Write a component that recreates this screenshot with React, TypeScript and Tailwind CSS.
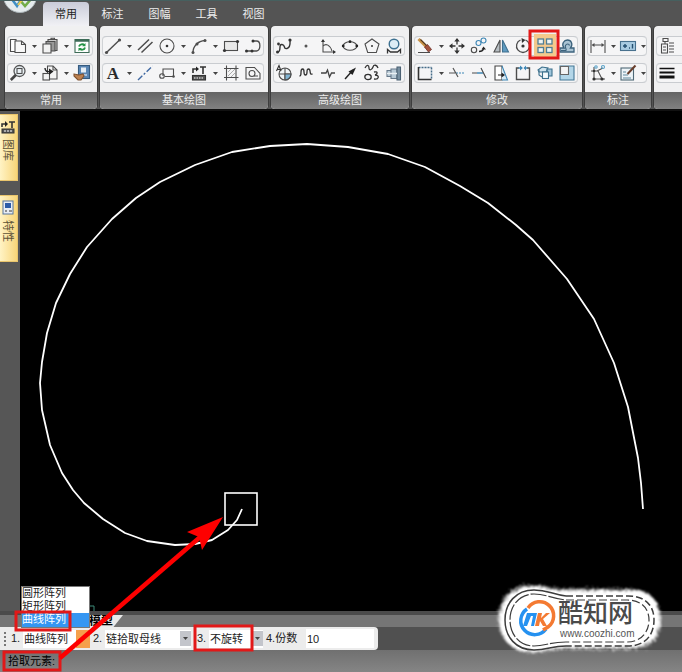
import React from "react";

type Item = { name: string; art: React.ReactNode; menu?: boolean; active?: boolean };

const K = "#4d4d4d";
const B = "#3f87b5";

const Icon = ({ children }: { children: React.ReactNode }) => (
  <svg viewBox="0 0 18 18" className="h-[18px] w-[18px] shrink-0" fill="none" stroke={K} strokeWidth="1.100" aria-hidden="true">
    {children}
  </svg>
);

const commonA: Item[] = [
  {
    name: "复制", menu: true,
    art: <><path d="M1.500 2.500h5.500v12H1.500z" fill="#fff" /><path d="M6 4h6.500l4 3.500v8h-10.500z" fill="#f8f8f8" /><path d="M12.500 4v3.500h4" /></>,
  },
  {
    name: "粘贴", menu: true,
    art: <><path d="M7 4V2.500h9v11h-2M10 2.500V1.200h3.500v1.300" fill="#ccc" /><path d="M5 14V4.500h9V14z" fill="#999" /><path d="M2 16V7h8v9z" fill="#f2f2f2" /></>,
  },
  {
    name: "刷新",
    art: <><path d="M2 2.500h14v13H2z" fill="#fff" stroke="#3d6b57" /><path d="M2 3.500h14" stroke="#3d6b57" strokeWidth="2.500" /><path d="M6 9.500c.5-2.300 4-3 5.500-1.200M12 10.500c-.5 2.500-4 3-5.500 1.200" stroke="#259447" strokeWidth="1.800" /><path d="M12.500 6v3.200H9.200zM5.500 14.200V11H9z" fill="#259447" stroke="none" /></>,
  },
];
const commonB: Item[] = [
  {
    name: "缩放", menu: true,
    art: <><circle cx="10.500" cy="7" r="5.500" fill="#eaf1f5" stroke="#555" strokeWidth="1.300" /><rect x="8" y="4.500" width="5" height="5" /><path d="M6.800 11l-5 5" stroke="#444" strokeWidth="2.600" /></>,
  },
  {
    name: "移动图层", menu: true,
    art: <><path d="M6.500 2h5.500l4 4v9H6.500z" fill="#f4f4f4" /><path d="M12 2v4h4" /><rect x="2" y="9.500" width="6.500" height="6.500" fill="#f4f4f4" /><path d="M4 4c0 3 2 4 5 3.500" stroke="#222" strokeWidth="1.400" /><path d="M8 4.500l4.500 3L8 11z" fill="#222" stroke="none" /></>,
  },
  {
    name: "格式刷",
    art: <><rect x="5.500" y="1.500" width="11" height="13" fill="#5a86b4" stroke="#365b7f" /><path d="M8 3.500h5v5H8z" fill="#e6eef5" stroke="none" /><path d="M8 11h6" stroke="#fff" /><path d="M1 10c2 0 3 1 5 1l4-1 1 2-3 4H5l-4-4z" fill="#bd8150" stroke="#805433" /></>,
  },
];

const drawA: Item[] = [
  { name: "直线", menu: true, art: <><path d="M2.500 15.500L15.500 3" strokeWidth="1.400" /><circle cx="2.500" cy="15.500" r="1.600" fill={K} stroke="none" /><circle cx="15.500" cy="3" r="1.600" fill={K} stroke="none" /></> },
  { name: "平行线", art: <path d="M2 13L13 2.500M5.500 15.500L16.500 5" strokeWidth="1.500" /> },
  { name: "圆", menu: true, art: <><circle cx="9" cy="9" r="7" /><circle cx="9" cy="9" r="1.300" fill="#333" stroke="none" /></> },
  { name: "圆弧", menu: true, art: <><path d="M3 15.500C3 9 8 4 15 3.500" strokeWidth="1.300" /><circle cx="3" cy="15.500" r="1.500" fill={K} stroke="none" /><circle cx="7" cy="7" r="1.500" fill={K} stroke="none" /><circle cx="15" cy="3.500" r="1.500" fill={K} stroke="none" /></> },
  { name: "矩形", art: <><rect x="2.500" y="4.500" width="13" height="9" fill="#e9e9e9" /><circle cx="2.500" cy="13.500" r="1.600" fill="#333" stroke="none" /><circle cx="15.500" cy="4.500" r="1.600" fill="#333" stroke="none" /></> },
  { name: "多段线", art: <><path d="M9 4h3.500c4.500 0 4.500 9 0 10H2.500" strokeWidth="1.300" /><g fill="#333" stroke="none"><circle cx="9" cy="4" r="1.500" /><circle cx="8" cy="14" r="1.500" /><circle cx="2.500" cy="14" r="1.500" /></g></> },
];
const drawB: Item[] = [
  { name: "文字", menu: true, art: <text x="9" y="15" textAnchor="middle" fill="#2b2b2b" stroke="none" fontFamily="Liberation Serif, serif" fontWeight="700" fontSize="17">A</text> },
  { name: "中心线", art: <path d="M2 16L16.500 2" stroke="#3f68a2" strokeWidth="1.400" strokeDasharray="6 2 2 2" /> },
  { name: "等距线", menu: true, art: <><path d="M5 12V5h10.500v7.500H7" /><circle cx="4" cy="12" r="2.300" /><circle cx="15.500" cy="12.500" r="1.300" fill={K} stroke="none" /></> },
  { name: "提取图符", menu: true, art: <><path d="M3 9V5h4M10 3h6M13 3v7" stroke="#333" strokeWidth="1.600" /><path d="M6 2.500L9 5 6 7.500z" fill="#222" stroke="none" /><rect x="2.500" y="11.500" width="13" height="4.500" fill="#555" stroke="#333" /><path d="M4 14h10" stroke="#fff" strokeDasharray="1.500 1" /></> },
  { name: "剖面线", art: <><path d="M4.500 1.500v15M14 1.500v15M2 4.500h14.500M2 13.500h14.500" /><path d="M6 8l3-3M6 12l7-7M9 13l4-4" stroke="#999" strokeWidth=".8" /></> },
  { name: "局部放大", art: <><path d="M2 3.500h8.500L16 9.500v5.500H2z" /><circle cx="8" cy="9.500" r="3" /><path d="M10 12h4" /></> },
];

const advA: Item[] = [
  { name: "样条", art: <><path d="M2.500 15C7 15 3 7 7 7.500s1 5 5 4 3-6 3-8.500" stroke="#333" strokeWidth="1.400" /><g fill="#333" stroke="none"><circle cx="2.500" cy="15" r="1.500" /><circle cx="3.500" cy="7" r="1.400" /><circle cx="15" cy="3" r="1.600" /></g></> },
  { name: "点", art: <circle cx="9" cy="9" r="1.500" fill="#555" stroke="none" /> },
  { name: "公式曲线", art: <><path d="M4 3v12h12M4 9c3-3 7-1 9 5" /><path d="M2 5l2-3 2 3zM14 13l3 2-3 2z" fill="#333" stroke="none" /></> },
  { name: "椭圆", art: <><ellipse cx="9" cy="9" rx="6.800" ry="4.300" /><g fill="#222" stroke="none"><circle cx="2.200" cy="9" r="1.400" /><circle cx="15.800" cy="9" r="1.400" /><circle cx="9" cy="4.700" r="1.400" /></g></> },
  { name: "正多边形", art: <><path d="M9 2l7 5-2.700 8.500H4.700L2 7z" /><circle cx="9" cy="9" r="1" fill="#333" stroke="none" /></> },
  { name: "圆弧拟合", art: <><circle cx="9" cy="7" r="4.800" stroke="#3d7191" fill="#dcecf5" strokeWidth="1.400" /><path d="M2.500 16.500v-4l3 2.500h7l3-2.500v4" stroke="#333" strokeWidth="1.300" /></> },
];
const advB: Item[] = [
  { name: "局部视图", art: <><circle cx="10" cy="10" r="6" fill="#f0f5f8" /><path d="M10 4v12M4 10h12" /><path d="M10 10h6a6 6 0 01-6 6z" fill="#7fb3d2" /><path d="M1.500 7L4 1.500 6 7M2.500 5.500h3" stroke="#333" /></> },
  { name: "波浪线", art: <path d="M2.500 12c3 0 0-7 3-7s0 6 3 6 0-6 3-6 0 6 4 5" stroke="#333" strokeWidth="1.300" /> },
  { name: "双折线", art: <path d="M2 9h5l1.500-3 2 7 2-4H16" stroke="#444" strokeWidth="1.300" /> },
  { name: "箭头", art: <><path d="M4 15L12 6" stroke="#222" strokeWidth="1.400" /><path d="M15 3.500L7.500 7.500l4 3.500z" fill="#222" stroke="none" /></> },
  { name: "齿轮", art: <><path d="M2 4c2-4 4-3 4 0s3 2 4-1 4-2 5 1M11 8c4-1 4 2 1 3 5 0 4 5-1 4" stroke="#333" strokeWidth="1.300" /><ellipse cx="5" cy="13" rx="3.200" ry="2.600" stroke="#333" strokeWidth="1.300" /></> },
  { name: "孔/轴", art: <><path d="M2 6.500h4v6H2zM6 5h6v9.500H6z" fill="#b9cbd7" stroke="#66798a" /><path d="M12 3h3.500v13H12z" fill="#7991a3" stroke="#4b6173" /><path d="M2 9.500h10" stroke="#e9f0f4" strokeWidth="1.500" /></> },
];

const editA: Item[] = [
  { name: "删除", menu: true, art: <><path d="M2.500 2l8 8" stroke="#c99347" strokeWidth="3" /><path d="M4.500 2.500l7 7" stroke="#51361c" /><path d="M8.500 10l3-2.500 4 5-3 2.500z" fill="#a4533b" stroke="#6c2c28" strokeWidth=".8" /><path d="M2 15.500h12" /></> },
  { name: "平移", art: <><path d="M9 3.500v11M3.500 9h11" stroke="#333" strokeWidth="1.300" strokeDasharray="4 3" /><path d="M9 1l2.700 3.500H6.300zM9 17l2.700-3.500H6.300zM1 9l3.500-2.700v5.400zM17 9l-3.500-2.700v5.400z" fill="#333" stroke="none" /></> },
  { name: "平移复制", art: <><circle cx="8.500" cy="6" r="2.500" stroke={B} /><circle cx="13.500" cy="3.500" r="2.500" stroke={B} /><circle cx="4" cy="13" r="2.700" /><path d="M9 14.500c3 0 4-1 4.500-2.500" stroke="#222" strokeWidth="1.300" /><path d="M11.500 12.500l2-3 2.500 3z" fill="#222" stroke="none" /></> },
  { name: "镜像", art: <><path d="M8 3v12H2z" fill="#b5bcc1" /><path d="M10.500 3v12h6z" fill="#5e9ac0" stroke="#40708f" /></> },
  { name: "旋转", art: <><path d="M11.500 3a6.500 6.500 0 11-5 0" strokeWidth="1.300" /><path d="M7.500 1l4 2-3.500 3z" fill="#333" stroke="none" /><circle cx="9" cy="9" r="1.600" fill="#333" stroke="none" /></> },
  { name: "阵列", active: true, art: <g fill="#eef4f3" stroke="#507f95" strokeWidth="1.300"><rect x="2" y="2" width="5.500" height="5" /><rect x="10.500" y="2" width="5.500" height="5" /><rect x="2" y="10.500" width="5.500" height="5" /><rect x="10.500" y="10.500" width="5.500" height="5" /></g> },
  { name: "偏移", art: <><path d="M2 15v-4h4c-3-4 0-8 3.500-8s6 4 3 8H16v4z" fill="#a9c3d3" stroke="#3c637d" strokeWidth="1.300" /><path d="M3 13.500h5c1-1-1.500-3-.5-5s3.500-2 4 0" stroke="#3c637d" /></> },
];
const editB: Item[] = [
  { name: "打散", menu: true, art: <><path d="M2.500 3.500h13M15.500 3.500v12" stroke="#456c88" strokeWidth="1.500" strokeDasharray="2 1" /><path d="M2.500 3v12.500h13" stroke="#333" strokeWidth="1.600" /></> },
  { name: "裁剪", art: <><path d="M8 9h9" stroke={B} strokeDasharray="2 1" /><path d="M5 4l5 9M1 9h6" stroke="#555" strokeWidth="1.200" /></> },
  { name: "延伸", art: <><path d="M7 9h6" stroke={B} strokeWidth="1.500" /><path d="M2 9h5M11 4l5 10" strokeWidth="1.200" /></> },
  { name: "拉伸", art: <><path d="M3 2h7v14H3z" stroke="#444" fill="#fff" /><path d="M10 2l5.500 14H10" stroke={B} fill="#d7eaf5" /><path d="M6 11h5" stroke="#222" /><path d="M9.500 8.500l3.500 2.500-3.500 2.500z" fill="#222" stroke="none" /></> },
  { name: "打断", art: <><path d="M5 4H2.500v11.500h13V4H13" strokeWidth="1.400" /><path d="M4.500 4h3M13.500 4h-3" stroke={B} strokeWidth="1.600" /><path d="M6 1.500L9 4 6 6.500zM12 1.500L9.500 4 12 6.500z" fill={B} stroke="none" /></> },
  { name: "分解", art: <g stroke="#3d718d"><path d="M2 6l4-3 6 1-2 4H3z" fill="#cfe4ef" /><path d="M3 6v5l3 2" /><path d="M11 5h5v7h-4z" fill="#9fc5db" /><rect x="6.500" y="8" width="6" height="6.500" fill="#f4fafc" /></g> },
  { name: "缩放图形", art: <><path d="M2 2h14v14H2z" fill="#b3d6e8" stroke="#447896" /><path d="M2.500 2.500h8v8h-8z" fill="#f4f4f4" stroke="#666" /></> },
];

const dimA: Item[] = [
  { name: "尺寸标注", menu: true, art: <><path d="M2 3v13M16 3v13M4 8h10" /><path d="M2.500 8l3-2v4zM15.500 8l-3-2v4z" fill={K} stroke="none" /></> },
  { name: "形位公差", menu: true, art: <><rect x="1.500" y="4.500" width="15" height="9" fill="#a9cce2" stroke="#48718e" /><path d="M4 9h4M6 7v4M10 11h1M13.500 7v4.500" stroke="#244f70" strokeWidth="1.400" /></> },
];
const dimB: Item[] = [
  { name: "坐标标注", menu: true, art: <><path d="M5 3v12h11M2 7h6l6-3M9 7l4 8" /><g fill="#333" stroke="none"><circle cx="5" cy="15" r="1.600" /><circle cx="13" cy="15" r="1.600" /><circle cx="5" cy="7" r="1.300" /></g><circle cx="14" cy="3" r="1.500" stroke="#58a1c8" /><circle cx="7" cy="3" r="1.200" stroke="#58a1c8" /></> },
  { name: "标注编辑", menu: true, art: <><rect x="2" y="4" width="12.500" height="12" fill="#edf4f8" stroke="#4e6876" /><path d="M4 8h3M4 11h5M4 14h8" stroke="#60879c" /><path d="M16.500 1.500L8.500 10" stroke="#693e2c" strokeWidth="2" /></> },
];
const moreA: Item[] = [
  { name: "图层", art: <><path d="M5 1.500h5v3H5zM7 4.500V7M3.500 7h6v9h-6z" /><path d="M11 6h5M11 9h5M11 12h5M11 15h5M5 10h3M5 13h3" /></> },
  { name: "样式", menu: true, art: <path d="M2 6h14M2 10h14" /> },
];
const moreB: Item[] = [
  { name: "线宽", art: <><path d="M1.500 4.500h15" stroke="#111" strokeWidth="1.300" /><path d="M1.500 8.500h15" stroke="#111" strokeWidth="2" /><path d="M1.500 13h15" stroke="#111" strokeWidth="3" /></> },
  { name: "颜色", menu: true, art: <rect x="3" y="3" width="11" height="11" fill="#888" /> },
];

function ToolRow({ items, tight }: { items: Item[]; tight?: boolean }) {
  return (
    <div className="flex h-5 items-center rounded-sm border-y border-[#c9ccd0] bg-[#f5f5f6] shadow-[inset_1px_0_0_#d0d3d6,inset_-1px_0_0_#d0d3d6]">
      {items.map((it) => (
        <React.Fragment key={it.name}>
          <button
            type="button"
            aria-label={it.name}
            className={
              it.active
                ? "flex h-6 w-[22px] items-center justify-center bg-[#f4c98c]"
                : "flex h-[18px] w-[22px] items-center justify-center"
            }
          >
            <Icon>{it.art}</Icon>
          </button>
          {it.menu && (
            <button
              type="button"
              aria-label={it.name + "菜单"}
              className={tight ? "flex h-[18px] w-2 items-center justify-center" : "flex h-[18px] w-2.5 items-center justify-center"}
            >
              <svg viewBox="0 0 5 3" className="h-[3px] w-[5px] shrink-0" aria-hidden="true"><path d="M0 0h5L2.500 3z" fill="#444" /></svg>
            </button>
          )}
        </React.Fragment>
      ))}
    </div>
  );
}

function Panel({ title, rows, tight }: { title: string; rows: Item[][]; tight?: boolean }) {
  return (
    <section className="shrink-0 overflow-hidden rounded-sm bg-[#f0f0f1] shadow-[0_0_0_1px_#3d3d3d]">
      <div className="flex h-[66px] flex-col gap-[7px] pt-2.5 pr-1 pl-0.5">
        {rows.map((r, i) => <ToolRow key={i} items={r} tight={tight} />)}
      </div>
      <h2 className="flex h-[17px] items-center justify-center bg-linear-to-b from-[#646464] to-[#818181] text-[11px] leading-none text-[#eeeeee]">{title}</h2>
    </section>
  );
}

function SideTab({ label, children }: { label: string; children: React.ReactNode }) {
  return (
    <button type="button" className="flex h-[67px] w-[18px] flex-col items-center gap-1 border-y border-r border-[#e9c56d] bg-linear-to-r from-[#fff3c4] to-[#f8d578] pt-1 pr-0.5">
      <svg viewBox="0 0 16 16" className="h-4 w-4 shrink-0" fill="none" stroke="#333" aria-hidden="true">{children}</svg>
      <span className="text-[11px] leading-[14px] text-[#5c5238] [text-orientation:sideways] [writing-mode:vertical-rl]">{label}</span>
    </button>
  );
}

function Choice({ no, id, label, options, box, hot }: { no: string; id: string; label: string; options: string[]; box: string; hot?: boolean }) {
  return (
    <div className="flex h-full items-center">
      <label htmlFor={id} aria-label={label} className="w-3">{no}</label>
      <div className={box}>
        <select id={id} className="h-[18px] min-w-0 flex-1 appearance-none bg-white pl-px text-[11px] leading-[18px] outline-none">
          {options.map((o) => <option key={o}>{o}</option>)}
        </select>
        <span className={hot ? "flex h-[18px] w-3.5 items-center justify-center bg-[#f5a04c]" : "flex h-[15px] w-[11px] items-center justify-center bg-[#c3c5cb]"}>
          <svg viewBox="0 0 5 3" className="h-[3px] w-[5px]" aria-hidden="true"><path d="M0 0h5L2.500 3z" fill="#444" /></svg>
        </span>
      </div>
    </div>
  );
}

const spiral =
  "643,509 641,483 638,458 628,407 614,363 594,319 567,279 533,240 516,225 488,203 460,186 425,167 388,154 348,147 307,144 270,146 232,152 195,165 160,182 136,198 112,219 87,247 70,274 56,303 47,333 42,362 40,383 42,410 50,445 62,473 73,490 84,503 103,519 125,533 147,541 175,545 195,544 212,540 228,530 237,520 242,509";

function Watermark() {
  return (
    <div className="absolute right-4 bottom-4 h-[70px] w-[170px]">
      <svg viewBox="0 0 170 70" className="h-full w-full overflow-visible" aria-label="酷知网 www.coozhi.com">
        <defs>
          <filter id="spray" x="-10%" y="-20%" width="120%" height="140%">
            <feTurbulence type="fractalNoise" baseFrequency=".7" numOctaves="2" seed="4" />
            <feDisplacementMap in="SourceGraphic" scale="10" />
            <feGaussianBlur stdDeviation="1.100" />
          </filter>
        </defs>
        <path d="M36 3C50 3 53 7 68 7H134C154 7 161 19 161 33S154 59 134 59H68C53 59 50 63 36 63C17 63 6 50 6 33S17 3 36 3z" fill="#fff" stroke="#fff" strokeWidth="7" filter="url(#spray)" />
        <g fill="none" stroke="#3c3c3c">
          <path d="M70 60C55 60 52 64 38 64C20 64 9 51 9 34S20 4 38 4C52 4 55 8 70 10" strokeWidth="1.500" />
          <path d="M70 56C53 56 50 60 38 60C23 60 14 48 14 34S23 8 38 8C50 8 53 12 70 14" strokeWidth="1.200" strokeDasharray="16 2" />
          <path d="M70 10H132C151 10 158 21 158 34S151 60 132 60H70" strokeWidth="1.500" strokeDasharray="7 3" />
          <path d="M70 14H131C146 14 153 23 153 34S146 56 131 56H70" strokeWidth="1.200" strokeDasharray="8 3" />
        </g>
        <path d="M31 23A14 14 0 1050 43" fill="none" stroke="#2591f0" strokeWidth="3.500" />
        <path d="M32 22A14 14 0 1152 41L47 44" fill="none" stroke="#f47a32" strokeWidth="3.500" />
        <path d="M31 27h10l-3 13h-3l2-10h-2l-4 10h-4z" fill="#2591f0" />
        <path d="M42 27h4l-1 5 5-5h4l-7 6 4 7h-4l-3-5-1 5h-4z" fill="#f47a32" />
        <text x="62" y="36" fill="#4a4a4a" fontFamily="'Noto Sans CJK SC', sans-serif" fontWeight="500" fontSize="25">酷知网</text>
        <text x="64" y="51" fill="#555" fontFamily="'Liberation Sans', sans-serif" fontSize="10">www.coozhi.com</text>
      </svg>
    </div>
  );
}

export default function App() {
  return (
    <div className="relative flex min-h-screen flex-col overflow-hidden bg-[#545454] font-['Liberation_Sans','Noto_Sans_CJK_SC',sans-serif] text-[11px] text-[#222]">
      <header className="flex h-[26px] items-end border-t border-[#46605f]">
        <button type="button" aria-label="主菜单" className="h-full w-[43px] overflow-hidden">
          <svg viewBox="0 0 43 25" className="h-[25px] w-[43px]" aria-hidden="true">
            <circle cx="20" cy="-5" r="16.500" fill="#e5ebed" stroke="#aab3b7" />
            <path d="M11-3l6 8 5-8" fill="none" stroke="#3f8fc5" strokeWidth="2.500" />
            <path d="M19-2l6 7 7-8" fill="none" stroke="#72ac48" strokeWidth="2.500" />
            <path d="M18 4l4-5" stroke="#ecc94c" strokeWidth="2" />
          </svg>
        </button>
        <nav className="flex h-6 items-stretch">
          <button type="button" className="w-[46px] rounded-t-sm bg-linear-to-b from-[#c9ccd9] to-[#f1f1f5] text-[#222]">常用</button>
          {["标注", "图幅", "工具", "视图"].map((t) => (
            <button type="button" key={t} className="w-[47px] text-[#eeeeee]">{t}</button>
          ))}
        </nav>
      </header>

      <div className="flex h-[85px] items-start gap-[3px] overflow-hidden border-b-2 border-[#111] pl-[5px]">
        <Panel title="常用" rows={[commonA, commonB]} />
        <Panel title="基本绘图" rows={[drawA, drawB]} />
        <Panel title="高级绘图" rows={[advA, advB]} />
        <Panel title="修改" rows={[editA, editB]} />
        <Panel title="标注" rows={[dimA, dimB]} tight />
        <Panel title="" rows={[moreA, moreB]} />
      </div>

      <main className="flex flex-1">
        <aside className="flex w-5 shrink-0 flex-col gap-3.5 bg-[#565656] pt-[3px]">
          <SideTab label="图库">
            <path d="M2 8V5h4M9 3h6M12 3v6" strokeWidth="1.600" /><path d="M5 2l3 3-3 3z" fill="#222" stroke="none" /><rect x="2" y="10" width="12" height="4" fill="#555" /><path d="M4 12h8" stroke="#fff" strokeDasharray="2 1" />
          </SideTab>
          <SideTab label="特性">
            <rect x="3" y="1" width="10" height="13" fill="#e8edf4" stroke="#56759c" /><rect x="5" y="3" width="6" height="5" fill="#2c5ba8" stroke="none" /><path d="M5 11h2M9 11h3" />
          </SideTab>
        </aside>
        <div className="flex-1 bg-black" />
      </main>

      <div className="flex h-4 items-end border-t-4 border-[#4b4b4b] bg-[#757575] pl-[89px]">
        <button type="button" className="h-3 w-[34px] bg-[#e9e9e9] text-left text-xs leading-3 font-bold text-black [clip-path:polygon(0_0,100%_0,72%_100%,0_100%)]">模型</button>
      </div>

      <div className="flex h-[23px] bg-[#505050]">
        <form className="flex h-full items-center gap-[3px] rounded-r bg-[#ececec] pr-1" onSubmit={(e) => e.preventDefault()}>
          <span className="flex w-2 flex-col items-end gap-0.5 pr-0.5">
            {[0, 1, 2, 3].map((n) => <i key={n} className="h-0.5 w-0.5 bg-[#777]" />)}
          </span>
          <Choice no="1." id="kind" label="阵列方式" options={["曲线阵列", "圆形阵列", "矩形阵列"]} box="flex w-[67px] items-center" hot />
          <Choice no="2." id="pick" label="拾取方式" options={["链拾取母线", "单个拾取母线"]} box="flex w-[86px] items-center bg-white" />
          <span className="w-0" />
          <Choice no="3." id="turn" label="旋转方式" options={["不旋转", "旋转"]} box="flex w-[54px] items-center bg-white" />
          <label htmlFor="copies" className="w-[37px]">4.份数</label>
          <input id="copies" defaultValue="10" className="h-[19px] w-[68px] bg-white pl-px outline-none" />
        </form>
      </div>

      <footer className="flex h-[22px] items-center bg-linear-to-b from-[#707070] to-[#858585] pl-2 text-black">拾取元素:</footer>

      <svg viewBox="0 0 682 672" className="pointer-events-none absolute top-0 left-0 h-[672px] w-[682px]" fill="none" aria-hidden="true">
        <polyline points={spiral} stroke="#fff" strokeWidth="1.800" strokeLinejoin="round" />
        <rect x="225" y="493" width="32" height="32" stroke="#fff" strokeWidth="1.600" />
        <path d="M90 606h4v5" stroke="#3c8a79" />
      </svg>

      <ul role="listbox" aria-label="阵列方式" className="absolute bottom-11 left-[21px] w-[69px] border border-[#777] bg-white leading-[13px] text-[#222]">
        <li role="option" aria-selected="false" className="h-[13px]">圆形阵列</li>
        <li role="option" aria-selected="false" className="h-[13px]">矩形阵列</li>
        <li role="option" aria-selected="true" className="h-[14px] bg-[#3596f2] text-white">曲线阵列</li>
      </ul>

      <svg viewBox="0 0 682 672" className="pointer-events-none absolute top-0 left-0 h-[672px] w-[682px]" fill="none" stroke="#e21818" strokeWidth="3" aria-hidden="true">
        <rect x="530" y="31" width="28" height="27" />
        <rect x="16" y="612" width="54" height="18" />
        <rect x="195" y="626" width="57" height="24" />
        <rect x="4" y="652" width="56" height="18" />
        <path d="M60 658L206 532" stroke="#fe0000" strokeWidth="4.500" />
        <path d="M223 517L187 532L199 537L202 550z" fill="#fe0000" stroke="none" />
      </svg>

      <Watermark />
    </div>
  );
}
